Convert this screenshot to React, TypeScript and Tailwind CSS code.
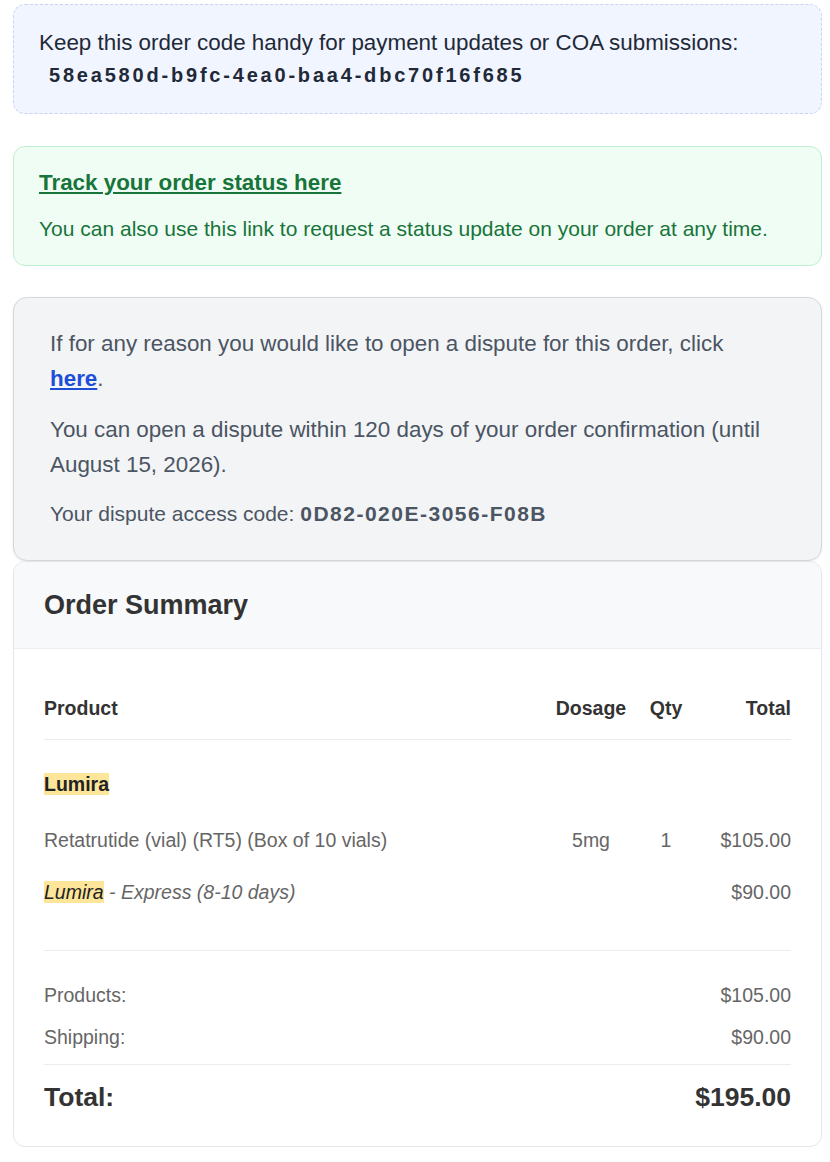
export default function App() {
  const font = { fontFamily: '"Liberation Sans", Arial, sans-serif' };
  return (
    <div className="min-h-screen bg-white pt-[4px] pl-[13px] pr-[8px] pb-[14px]" style={font}>
      {/* order code */}
      <div className="rounded-[12px] border border-dashed border-[#c9d3f5] bg-[#f0f5ff] px-[25px] pt-[22px] pb-[22px] text-[#1f2937]">
        <p className="text-[22.4px] leading-[32px]">
          Keep this order code handy for payment updates or COA submissions:
        </p>
        <p className="ml-[10px] text-[20px] font-bold leading-[32px] tracking-[2.8px]">
          58ea580d-b9fc-4ea0-baa4-dbc70f16f685
        </p>
      </div>

      {/* tracking */}
      <div className="mt-[32px] rounded-[12px] border border-[#bff0cf] bg-[#f0fdf4] px-[25px] pt-[22px] pb-[20px] text-[#17743a]">
        <a href="#" className="block text-[22.4px] font-bold leading-[28px] underline">
          Track your order status here
        </a>
        <p className="mt-[16px] text-[21px] leading-[32px]">
          You can also use this link to request a status update on your order at any time.
        </p>
      </div>

      {/* dispute */}
      <div className="mt-[31px] rounded-[14px] border border-[#d4d7dc] bg-[#f3f4f6] pl-[36px] pr-[46px] pt-[28px] pb-[30px] text-[#4b5563] shadow-[0_1px_3px_rgba(0,0,0,0.08)]">
        <p className="text-[22.4px] leading-[35px]">
          If for any reason you would like to open a dispute for this order, click{" "}
          <a href="#" className="font-bold text-[#1d4ed8] underline">here</a>.
        </p>
        <p className="mt-[16px] text-[22.4px] leading-[35px]">
          You can open a dispute within 120 days of your order confirmation (until August 15, 2026).
        </p>
        <p className="mt-[16px] text-[21px] leading-[32px]">
          Your dispute access code:{" "}
          <span className="font-bold tracking-[1.5px]">0D82-020E-3056-F08B</span>
        </p>
      </div>

      {/* order summary */}
      <div className="overflow-hidden rounded-[12px] border border-[#e3e5e8] bg-white">
        <div className="border-b border-[#eceef0] bg-[#f8f9fa] px-[30px] py-[26px]">
          <h2 className="text-[27px] font-bold leading-[34px] text-[#333]">Order Summary</h2>
        </div>
        <div className="px-[30px] pt-[45px] pb-[32px] text-[19.5px] leading-[28px]">
          <div className="flex border-b border-[#ececec] pb-[17px] font-bold text-[#333]">
            <div className="flex-1">Product</div>
            <div className="w-[80px] text-center">Dosage</div>
            <div className="w-[70px] text-center">Qty</div>
            <div className="w-[90px] text-right">Total</div>
          </div>

          <div className="pt-[30px]">
            <span className="bg-[#fde59a] font-bold text-[#222]">Lumira</span>
          </div>

          <div className="mt-[28px] flex text-[#666]">
            <div className="flex-1">Retatrutide (vial) (RT5) (Box of 10 vials)</div>
            <div className="w-[80px] text-center">5mg</div>
            <div className="w-[70px] text-center">1</div>
            <div className="w-[90px] text-right">$105.00</div>
          </div>

          <div className="mt-[24px] flex pb-[44px] text-[#666]">
            <div className="flex-1 italic">
              <span className="bg-[#fde59a] text-[#222]">Lumira</span> - Express (8-10 days)
            </div>
            <div className="w-[90px] text-right">$90.00</div>
          </div>

          <div className="border-t border-[#ececec] pt-[30px] text-[#666]">
            <div className="flex justify-between">
              <span>Products:</span>
              <span>$105.00</span>
            </div>
            <div className="mt-[14px] flex justify-between pb-[13px]">
              <span>Shipping:</span>
              <span>$90.00</span>
            </div>
          </div>

          <div className="flex justify-between border-t border-[#ececec] pt-[15px] text-[26.5px] font-bold leading-[34px] text-[#333]">
            <span>Total:</span>
            <span>$195.00</span>
          </div>
        </div>
      </div>
    </div>
  );
}
